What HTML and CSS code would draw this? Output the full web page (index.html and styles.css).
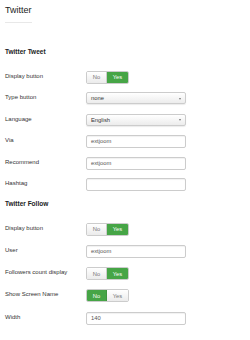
FILE: index.html
```html
<!DOCTYPE html>
<html lang="en">
<head>
  <meta charset="UTF-8" />
  <title>Twitter</title>
  <link rel="stylesheet" href="styles.css">
</head>
<body>
  <h2 class="title">Twitter</h2>
  <div class="title-line"></div>

  <div class="group first">
    <div class="legend">Twitter Tweet</div>

    <div class="row">
      <label>Display button</label>
      <div class="toggle"><span class="opt">No</span><span class="opt on">Yes</span></div>
    </div>
    <div class="row">
      <label>Type button</label>
      <div class="select">none<span class="caret"></span></div>
    </div>
    <div class="row">
      <label>Language</label>
      <div class="select">English<span class="caret"></span></div>
    </div>
    <div class="row">
      <label>Via</label>
      <div class="input">extjoom</div>
    </div>
    <div class="row">
      <label>Recommend</label>
      <div class="input">extjoom</div>
    </div>
    <div class="row">
      <label>Hashtag</label>
      <div class="input"></div>
    </div>
  </div>

  <div class="group second">
    <div class="legend">Twitter Follow</div>

    <div class="row">
      <label>Display button</label>
      <div class="toggle"><span class="opt">No</span><span class="opt on">Yes</span></div>
    </div>
    <div class="row">
      <label>User</label>
      <div class="input">extjoom</div>
    </div>
    <div class="row">
      <label>Followers count display</label>
      <div class="toggle"><span class="opt">No</span><span class="opt on">Yes</span></div>
    </div>
    <div class="row">
      <label>Show Screen Name</label>
      <div class="toggle"><span class="opt on">No</span><span class="opt">Yes</span></div>
    </div>
    <div class="row">
      <label>Width</label>
      <div class="input">140</div>
    </div>
  </div>
</body>
</html>
```

FILE: styles.css
```css
body { margin: 0; padding: 0 5px; background: #fff; color: #333; font-family: "Liberation Sans", Arial, sans-serif; }

.title { margin: 0; padding-top: 5px; font-size: 9px; line-height: 11px; font-weight: normal; color: #222; }
.title-line { width: 27px; height: 1px; background: #e8e8e8; margin-top: 6px; }

.group { margin-top: 8px; }
.group.first { margin-top: 25px; }
.legend { font-size: 6.5px; line-height: 7px; font-weight: bold; color: #222; margin-bottom: 15.5px; }
.second .legend { margin-bottom: 16px; }

.row { display: flex; align-items: flex-start; height: 13px; margin-bottom: 8.5px; }
.second .row { margin-bottom: 9.3px; }
.row label { width: 81px; flex: none; font-size: 6px; line-height: 7px; padding-top: 2px; color: #333; }

.input, .select { box-sizing: border-box; width: 100px; height: 13px; border: 1px solid #ccc; border-radius: 2px; font-size: 5.8px; line-height: 11px; padding-left: 4px; color: #555; box-shadow: inset 0 1px 1px rgba(0,0,0,0.06); }
.select { position: relative; height: 12px; line-height: 10px; background: linear-gradient(#fff, #ececec); box-shadow: 0 1px 1px rgba(0,0,0,0.08); color: #333; }
.caret { position: absolute; right: 4px; top: 4.5px; width: 0; height: 0; border-left: 1.5px solid transparent; border-right: 1.5px solid transparent; border-top: 2px solid #777; }

.toggle { display: flex; height: 13px; box-sizing: border-box; border: 1px solid #ccc; border-radius: 2px; overflow: hidden; font-size: 5.8px; }
.opt { display: flex; align-items: center; justify-content: center; color: #777; background: linear-gradient(#fff, #ebebeb); }
.opt:first-child { width: 19px; border-right: 1px solid #ccc; }
.opt:last-child { width: 21px; }
.opt.on { background: #46a546; color: #fff; border-color: #3f953f; }
```
